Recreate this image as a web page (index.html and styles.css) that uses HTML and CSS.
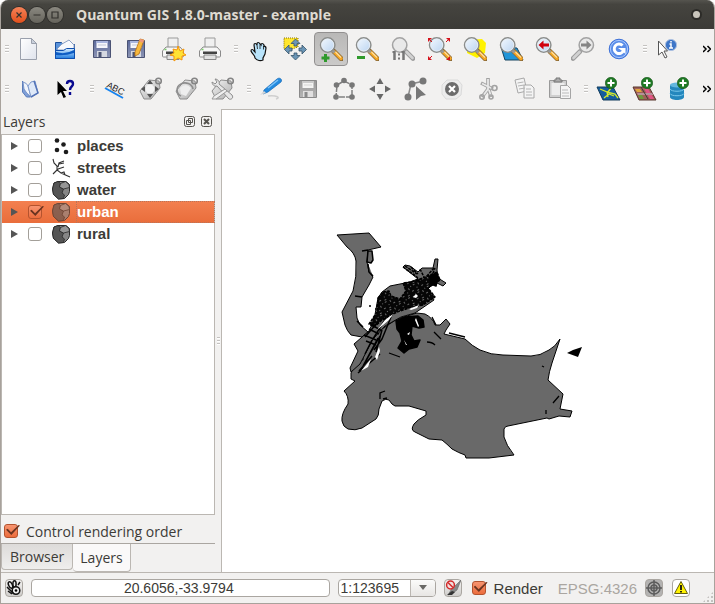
FILE: index.html
```html
<!DOCTYPE html>
<html lang="en">
<head>
<meta charset="utf-8">
<title>Quantum GIS 1.8.0-master - example</title>
<link rel="stylesheet" href="styles.css">
</head>
<body>
<svg class="defs" aria-hidden="true">
  <defs>
    <linearGradient id="lensBlue" x1="0" y1="0" x2="1" y2="1"><stop offset="0" stop-color="#f4f9ff"/><stop offset="1" stop-color="#b9d3f0"/></linearGradient>
    <linearGradient id="paper" x1="0" y1="0" x2="1" y2="1"><stop offset="0" stop-color="#fff"/><stop offset="1" stop-color="#dfe3ec"/></linearGradient>
    <linearGradient id="disk" x1="0" y1="0" x2="0" y2="1"><stop offset="0" stop-color="#5c6a9c"/><stop offset="1" stop-color="#8d95b4"/></linearGradient>
    <linearGradient id="blue" x1="0" y1="0" x2="0" y2="1"><stop offset="0" stop-color="#d8efff"/><stop offset="1" stop-color="#1f7be0"/></linearGradient>
    <linearGradient id="silver" x1="0" y1="0" x2="1" y2="1"><stop offset="0" stop-color="#f5f5f5"/><stop offset="1" stop-color="#adadad"/></linearGradient>
    <pattern id="cityBlocks" width="11" height="9" patternUnits="userSpaceOnUse" patternTransform="rotate(-32)">
      <path d="M0 0h11v9H0z" fill="#060606"/>
      <path d="M1 1h2v1H1zM6 2h1v2H6zM8 6h2v1H8zM3 5h1v1H3zM2 8h2v1H2zM9 1h1v1H9z" fill="#696969"/>
    </pattern>
    <symbol id="lens" viewBox="0 0 24 24">
      <path d="M15 14.500l7.500 7.500" stroke="#8a6a3a" stroke-width="5" stroke-linecap="round"/>
      <path d="M15.500 15l6.500 6.500" stroke="#f5a623" stroke-width="3.400" stroke-linecap="round"/>
      <path d="M16.500 15l5.500 5.500" stroke="#ffe0a0" stroke-width="1.200"/>
      <path d="M13 13l2.500 2.500" stroke="#999" stroke-width="3"/>
      <circle cx="8.700" cy="8" r="7.200" fill="url(#lensBlue)" stroke="#8b8d8b" stroke-width="1.500"/>
      <circle cx="8.700" cy="8" r="6" fill="none" stroke="#e9eef4" stroke-width=".8"/>
    </symbol>
    <symbol id="lensGray" viewBox="0 0 24 24">
      <path d="M15 14.500l7 7" stroke="#9d9d9d" stroke-width="4.600" stroke-linecap="round"/>
      <path d="M15.500 15l6 6" stroke="#d2d2d2" stroke-width="2.600" stroke-linecap="round"/>
      <circle cx="8.700" cy="8" r="7.200" fill="#e9e9e9" stroke="#a3a3a3" stroke-width="1.500"/>
    </symbol>
    <symbol id="printer" viewBox="0 0 24 24">
      <path d="M7 1h10v10H7z" fill="#f0f0f0" stroke="#9a9a9a"/>
      <path d="M5 10h14l3.500 4v5q0 1-1 1h-19q-1 0-1-1v-5z" fill="#f7f7f7" stroke="#8b8b8b"/>
      <path d="M5 14.500h14v2.500H5z" fill="#444"/>
      <path d="M6 18h12v4.500H6z" fill="#e2e2e2" stroke="#888"/>
      <path d="M3.500 12.500h2" stroke="#7bd06a" stroke-width="1.500"/>
    </symbol>
    <symbol id="floppy" viewBox="0 0 24 24">
      <path d="M3.500 3.500h17v17h-17z" fill="url(#disk)" stroke="#4b5374"/>
      <path d="M6.500 4h11v7h-11z" fill="#f5f6fb"/><path d="M6.500 4h11v2h-11z" fill="#a9b6df"/>
      <path d="M8 8h8" stroke="#c3c8d8"/>
      <path d="M7 14h10v6H7z" fill="#d5d8e1"/><path d="M8.500 15h3v5h-3z" fill="#4b5374"/>
    </symbol>
    <symbol id="tag" viewBox="0 0 24 24">
      <path d="M1 14L10 3l10 1 1 7-9 11-7 0z" fill="url(#silver)" stroke="#8c8c8c"/>
      <circle cx="19.500" cy="4" r="2.800" fill="none" stroke="#858585" stroke-width="1.600"/>
    </symbol>
    <symbol id="plus" viewBox="0 0 12 12">
      <circle cx="6" cy="6" r="5.700" fill="#1f7a24" stroke="#125016" stroke-width=".6"/>
      <path d="M6 2.500v7M2.500 6h7" stroke="#fff" stroke-width="2"/>
    </symbol>
    <symbol id="polygonLayer" viewBox="0 0 20 20">
      <path d="M7 1.500h8l3.500 3v7l-1 3-4 4-6 .5-5-4.500L1.500 9 3 3z" fill="#868686" stroke="#2a2a2a" stroke-linejoin="round"/>
      <path d="M3 3l4-1.500 2.500 2L8.500 7l4 2-1.500 4 2.500 2-1 3.500-5 .5-5-4.500L1.500 9z" fill="#555" stroke="#2a2a2a" stroke-width=".8"/>
      <path d="M9.500 3.500l5-2 3.500 3 .5 3-6 1.500-4-2z" fill="#969696" stroke="#2a2a2a" stroke-width=".8"/>
    </symbol>
  </defs>
</svg>
<div class="window">
  <header class="titlebar">
    <button class="wm close" aria-label="Close"><svg viewBox="0 0 16 16"><path d="M5.500 5.500l5 5m0-5l-5 5"/></svg></button>
    <button class="wm" aria-label="Minimize"><svg viewBox="0 0 16 16"><path d="M4.500 8h7"/></svg></button>
    <button class="wm" aria-label="Maximize"><svg viewBox="0 0 16 16"><path d="M5 5h6v6H5z"/></svg></button>
    <h1>Quantum GIS 1.8.0-master - example</h1>
    <span class="dot"></span>
  </header>

  <div class="toolbar">
    <i class="grip"></i>
    <div class="group">
      <button aria-label="New project"><svg viewBox="0 0 24 24"><path d="M2.500 1.500h11l5 5v16h-16z" fill="url(#paper)" stroke="#9aa0ac"/><path d="M13.500 1.500v5h5z" fill="#c9d0dc" stroke="#9aa0ac"/></svg></button>
      <button aria-label="Open project"><svg viewBox="0 0 24 24"><path d="M1.500 5.500h6l2 2h11v14h-19z" fill="#5b93da" stroke="#1b4f9c"/><path d="M3 12l5-5 7-4 5 5v5H4z" fill="#f7f9fd" stroke="#8ba0c4"/><path d="M1.500 21.500v-8h8l3-2h8v10z" fill="url(#blue)" stroke="#0f4faf"/><path d="M2 15q9 3 18-2v3q-9 3-18 2z" fill="#0d5cc4"/></svg></button>
      <button aria-label="Save project"><svg viewBox="0 0 24 24"><use href="#floppy"/></svg></button>
      <button aria-label="Save project as"><svg viewBox="0 0 24 24"><use href="#floppy" x="-2"/><path d="M14 2l4 1-5 14-4 2 0-4z" fill="#f7b83d" stroke="#b87418" stroke-width=".8"/><path d="M14 2l4 1-1 3-4-2z" fill="#f0967a"/></svg></button>
      <button aria-label="New print composer"><svg viewBox="0 0 24 24"><use href="#printer" x="-1"/><path d="M16 9l2 5 4-2-1 4 3 2-4 1 0 4-4-2-4 3 0-5-4-1 4-2-1-4 4 1z" fill="#ffe234" stroke="#f4940c"/></svg></button>
      <button aria-label="Composer manager"><svg viewBox="0 0 24 24"><use href="#printer"/></svg></button>
    </div>
    <i class="grip mid"></i>
    <div class="group">
      <button aria-label="Pan map"><svg viewBox="0 0 24 24"><path d="M8 21c0-3-3-4-4-7 0-2 2-2 3 0l1 1-1-7c0-2 2-2 3 0l0-1c0-2 2-2 3 0l1 1c0-2 2-2 3 0l0 2c0-1 2-1 2 1l-1 6-2 4v2c-2 1-6 1-8-2z" fill="#b9e4fb" stroke="#111" stroke-width="1.200"/><path d="M10 8l.5 4M13 7.500V12m3.500-3v3.500" stroke="#111" stroke-width=".8"/></svg></button>
      <button aria-label="Pan map to selection"><svg viewBox="0 0 24 24"><path d="M1 1h14v9l-6 2H1z" fill="#ffe62e" stroke="#8a7200" stroke-dasharray="1 1"/><path d="M12.500 2l4.500 4.500h-3V9h-3V6.500H8zM12.500 23l-4.500-4.500h3V16h3v2.500h3zM1.500 12.500L6 8v3h3v3H6v3zM23.500 12.500L19 8v3h-3v3h3v3z" fill="#6b95b5" stroke="#36546b" stroke-width=".8"/></svg></button>
      <button class="active" aria-label="Zoom in" aria-pressed="true"><svg viewBox="0 0 24 24"><use href="#lens"/><path d="M6.500 17v8M2.500 21h8" stroke="#2f9a2c" stroke-width="3"/></svg></button>
      <button aria-label="Zoom out"><svg viewBox="0 0 24 24"><use href="#lens"/><path d="M2 20.500h8" stroke="#2f9a2c" stroke-width="3"/></svg></button>
      <button aria-label="Zoom to native resolution"><svg viewBox="0 0 24 24"><use href="#lensGray"/><path d="M3.500 14v9M12.500 14v9" stroke="#777" stroke-width="2.500"/><path d="M1.500 15h2M10.500 15h2M8 16.500v2m0 2v2" stroke="#777" stroke-width="2"/></svg></button>
      <button aria-label="Zoom full"><svg viewBox="0 0 24 24"><use href="#lens" x="1"/><g fill="#d5121c"><path d="M1 1h4L1 5zM23 1h-4l4 4zM1 23h4l-4-4zM23 23h-4l4-4z"/></g><path d="M2 2l3 3M22 2l-3 3M2 22l3-3" stroke="#d5121c"/></svg></button>
      <button aria-label="Zoom to selection"><svg viewBox="0 0 24 24"><path d="M5 3l14-1 4 4-1 10-8 5-10-5z" fill="#fff200"/><use href="#lens"/></svg></button>
      <button aria-label="Zoom to layer"><svg viewBox="0 0 24 24"><path d="M2 10l16 1 6 12H6z" fill="#2095d8" stroke="#17445f"/><use href="#lens"/></svg></button>
      <button aria-label="Zoom last"><svg viewBox="0 0 24 24"><use href="#lens"/><path d="M3.500 8l5-4.500v3H14v3H8.500v3z" fill="#d1000f"/></svg></button>
      <button aria-label="Zoom next"><svg viewBox="0 0 24 24"><g transform="matrix(-1 0 0 1 24 0)"><use href="#lensGray"/></g><path d="M20.500 8l-5-4.500v3H10v3h5.500v3z" fill="#858585"/></svg></button>
      <button aria-label="Refresh"><svg viewBox="0 0 24 24"><circle cx="12" cy="12" r="9.800" fill="#5a8de8" stroke="#3f72d8"/><circle cx="12" cy="12" r="8.600" fill="none" stroke="#a9c8ff"/><path d="M15.500 8.500a4.800 4.800 0 1 0 1 5" fill="none" stroke="#fff" stroke-width="3"/><path d="M11 11h7.500v6l-2.500-2.500z" fill="#fff"/></svg></button>
    </div>
    <i class="grip mid"></i>
    <div class="group">
      <button aria-label="Identify features"><svg viewBox="0 0 24 24"><circle cx="15" cy="8" r="5.600" fill="#3e76c8" stroke="#aabfe0"/><path d="M13.500 7H15v4m-2 0h4M15 4v1.500" stroke="#fff" stroke-width="1.500" fill="none"/><path d="M2.500 4v14l3.500-3 3 6 2-1-3-6h3.500z" fill="#fff" stroke="#555"/></svg></button>
    </div>
    <button class="more" aria-label="More tools"><svg viewBox="0 0 8 8"><path d="M0 1l3 3-3 3M4.500 1l3 3-3 3"/></svg></button>
  </div>

  <div class="toolbar">
    <i class="grip"></i>
    <div class="group">
      <button aria-label="Help contents"><svg viewBox="0 0 24 24"><path d="M4.500 4l2 9 6 7-4 0-4-5z" fill="#7f9fd8" stroke="#5a7cba"/><path d="M5 5q4 1 5 4l3 11q-5-4-7-8z" fill="#f1f5fc" stroke="#7e99cb"/><path d="M13 5l4-1 3 12-7 4-3-11z" fill="#dfe9f8" stroke="#7e99cb"/><path d="M16 4l4 12-7 4" fill="none" stroke="#5474b8" stroke-width="1.500"/></svg></button>
      <button aria-label="What's this"><svg viewBox="0 0 24 24"><path class="ink" d="M3.500 4v14l3.500-3 2.500 6 2.500-1-3-6h4z"/><path d="M13 7c0-4 6-4 6 0 0 3-3 2-3 6M16 15v3" fill="none" stroke="#0a0a90" stroke-width="2.400"/></svg></button>
    </div>
    <i class="grip mid"></i>
    <div class="group">
      <button aria-label="Labeling"><svg viewBox="0 0 24 24"><path d="M2 11l18 10" stroke="#1784f0" stroke-width="2"/><text class="abc" x="3" y="10" transform="rotate(27 3 10)">ABC</text></svg></button>
      <button aria-label="Move label"><svg viewBox="0 0 24 24"><use href="#tag"/><circle cx="11" cy="12" r="4.500" fill="#f4f4f4"/><path d="M11 3l3 4H8zM11 21l3-4H8zM2 12l4-3v6zM20 12l-4-3v6z" fill="#555"/></svg></button>
      <button aria-label="Rotate label"><svg viewBox="0 0 24 24"><use href="#tag"/><path d="M6 19a8 7 0 1 1 12-7" fill="none" stroke="#8e8e8e" stroke-width="1.600"/><path d="M5 11q6-6 11 0l-5 8-5-2z" fill="#eee"/></svg></button>
      <button aria-label="Change label"><svg viewBox="0 0 24 24"><use href="#tag"/><path d="M4 2c3 0 5 3 4 5l13 11c2 3-1 5-3 4L6 9C3 10 1 7 1 5l3 2 2-2z" fill="#e6e6e6" stroke="#8d8d8d"/><path d="M14 12l2 2-11 8-4 0 2-3z" fill="#efefef" stroke="#999"/></svg></button>
    </div>
    <i class="grip mid"></i>
    <div class="group">
      <button aria-label="Toggle editing"><svg viewBox="0 0 24 24"><path d="M8 19c9-1 13 2 8 3" fill="none" stroke="#cfcfcf" stroke-width="1.500"/><path d="M4 13L17 2c2-2 6 0 4 3L8 15l-5 2z" fill="#238be0" stroke="#1467b4" stroke-width=".7"/><path d="M8 11L18 3" stroke="#7fc3f8" stroke-width="1.500"/><path d="M0 18l4-4 2 2z" fill="#d8d8d8"/></svg></button>
      <button aria-label="Save edits"><svg class="gray" viewBox="0 0 24 24"><use href="#floppy"/></svg></button>
      <button aria-label="Add feature"><svg viewBox="0 0 24 24"><path d="M12 4l8 4v12H4L5 8z" fill="none" stroke="#808080" stroke-width="1.500" stroke-dasharray="6 1"/><g fill="#777"><circle cx="12" cy="3.500" r="2.800"/><circle cx="4.500" cy="8" r="2.800"/><circle cx="20" cy="8" r="2.800"/><circle cx="4" cy="20" r="2.800"/><circle cx="20" cy="20" r="2.800"/></g></svg></button>
      <button aria-label="Move feature"><svg viewBox="0 0 24 24"><path d="M12 1l3.500 6h-7zM12 23l3.500-6h-7zM1 12l6-3.500v7zM23 12l-6-3.500v7z" fill="#686868"/></svg></button>
      <button aria-label="Node tool"><svg viewBox="0 0 24 24"><path d="M4 20L7 7l13-3" fill="none" stroke="#8c8c8c" stroke-width="1.500"/><g fill="#777"><circle cx="4" cy="20" r="3.500"/><circle cx="8" cy="7" r="3.500"/><circle cx="19" cy="4" r="3.500"/><path d="M12 9l10 9-5 1-5 4z"/></g></svg></button>
      <button aria-label="Delete selected"><svg viewBox="0 0 24 24"><path d="M7 3l11 0 4 5-1 10-5 4H6l-4-5V8z" fill="#ececec" stroke="#dadada"/><circle cx="12" cy="12" r="7" fill="#6c6c6c"/><path d="M9 9l6 6m0-6l-6 6" stroke="#fff" stroke-width="2.200"/></svg></button>
      <button aria-label="Cut features"><svg viewBox="0 0 24 24"><g stroke="#a2a2a2" stroke-width="3.600"><path d="M12 1v12M5 6l12 6M12 12l-6 8M13 13l2 7"/></g><g stroke="#e8e8e8" stroke-width="1.800"><path d="M12 2v11M6 6.500l11 5.500M12 12l-5 7M13 13l2 6"/></g><g fill="none" stroke="#a2a2a2" stroke-width="1.600"><circle cx="6" cy="20" r="2.200"/><circle cx="18.500" cy="11" r="2.500"/><circle cx="15" cy="20" r="2"/></g></svg></button>
      <button aria-label="Copy features"><svg viewBox="0 0 24 24"><g fill="#f4f4f4" stroke="#a8a8a8"><path d="M3 3l9-2 3 13-9 2z"/><path d="M12 8h7l3 3v10H12z"/></g><path d="M5.500 6l6-1M6 9l6-1M7 12l6-1M14 12h5m-5 3h6m-6 3h6" stroke="#b4b4b4"/></svg></button>
      <button aria-label="Paste features"><svg viewBox="0 0 24 24"><path d="M1.500 3.500h17v17h-17z" fill="#cfcfcf" stroke="#999"/><path d="M3.500 6h13v12h-13z" fill="#ededed"/><path d="M6 5V3h2V1h4v2h2v2z" fill="#aaa" stroke="#777"/><path d="M12.500 8.500h7l3 3v10h-10z" fill="#f5f5f5" stroke="#a5a5a5"/><path d="M14 13h6m-6 3h7m-7 3h7" stroke="#bbb"/></svg></button>
    </div>
    <i class="grip mid"></i>
    <div class="group">
      <button aria-label="Add vector layer"><svg viewBox="0 0 24 24"><path d="M0 10h16l7 13H6z" fill="#155d9e" stroke="#123c5c"/><path d="M3 12l7 3 1 5m-1-5l8 2 3 4M7 21l5-4 5 2M14 11l-3 4" fill="none" stroke="#d5e92c" stroke-width="1.300"/><use href="#plus" x="8" y="0" width="12" height="12"/></svg></button>
      <button aria-label="Add raster layer"><svg viewBox="0 0 24 24"><path d="M0 10h16l7 13H6z" fill="#a06058" stroke="#58362d"/><path d="M2 12h5l2 3H4z" fill="#e0a53d"/><path d="M5 18h4l2 4H7z" fill="#6d9a3c"/><path d="M10 10h4l7 12h-4z" fill="#e25385"/><path d="M4 16l15 0 2 2H5z" fill="#b79098"/><path d="M8 10l7 12" stroke="#403a35"/><use href="#plus" x="8" y="0" width="12" height="12"/></svg></button>
      <button aria-label="Add PostGIS layer"><svg viewBox="0 0 24 24"><path d="M1 8v12c0 4 14 4 14 0V8z" fill="#2487bd"/><ellipse cx="8" cy="8" rx="7" ry="2.500" fill="#63b7df"/><path d="M1 12c1 3 13 3 14 0M1 16.500c1 3 13 3 14 0" fill="none" stroke="#7bc7ea"/><use href="#plus" x="8" y="0" width="12" height="12"/></svg></button>
    </div>
    <button class="more" aria-label="More tools"><svg viewBox="0 0 8 8"><path d="M0 1l3 3-3 3M4.500 1l3 3-3 3"/></svg></button>
  </div>

  <main class="workspace">
    <aside class="dock">
      <div class="dock-title">
        <h2>Layers</h2>
        <button aria-label="Float panel"><svg viewBox="0 0 11 11"><rect x=".5" y=".5" width="10" height="10" rx="2"/><path d="M4.500 2.500h4v4h-4zM2.500 4.500h4v4h-4z"/></svg></button>
        <button aria-label="Close panel"><svg viewBox="0 0 11 11"><rect x=".5" y=".5" width="10" height="10" rx="2"/><path d="M3 3l5 5m0-5L3 8" stroke-width="2"/></svg></button>
      </div>
      <ul class="tree">
        <li><i class="arrow"></i><input type="checkbox" id="l1"><svg viewBox="0 0 20 20"><g fill="#1c1c1c"><circle cx="6" cy="4.500" r="2.300"/><circle cx="12.500" cy="8.500" r="2.300"/><circle cx="6" cy="14" r="2.300"/><circle cx="15" cy="16" r="2.300"/></g></svg><label for="l1">places</label></li>
        <li><i class="arrow"></i><input type="checkbox" id="l2"><svg viewBox="0 0 20 20"><path d="M2 1l1 4 3 3 0 4 4 3 9 4M7 9l1-4 5-2M8 6l5-1M7 11l6-2M2 16l5-5M10 15l3-1 1 3" fill="none" stroke="#333" stroke-width="1.100"/></svg><label for="l2">streets</label></li>
        <li><i class="arrow"></i><input type="checkbox" id="l3"><svg viewBox="0 0 20 20"><use href="#polygonLayer"/></svg><label for="l3">water</label></li>
        <li class="selected"><i class="arrow"></i><input type="checkbox" id="l4" checked><svg viewBox="0 0 20 20"><use href="#polygonLayer"/></svg><label for="l4">urban</label></li>
        <li><i class="arrow"></i><input type="checkbox" id="l5"><svg viewBox="0 0 20 20"><use href="#polygonLayer"/></svg><label for="l5">rural</label></li>
      </ul>
      <div class="order"><input type="checkbox" id="order" checked><label for="order">Control rendering order</label></div>
      <nav class="tabs"><button>Browser</button><button class="current">Layers</button></nav>
    </aside>
    <div class="splitter"><i></i></div>
    <section class="canvas">
      <svg viewBox="222 110 492 462" role="img" aria-label="Map">
        <g fill="#696969" stroke="#000" stroke-width="1" stroke-linejoin="round">
          <path d="M337 235l32-2 12 14-13 3-1 12 2 10 4 5-4 8-7 12-1 10-5 0 1 11 3 7 8 7-6 5-11-2q-4-4-6-10l-3-13 11-21q4-14 3-30-1-8-9-14z"/>
          <path d="M362 337q3 12 1 23l-7 1-5 12v6l4 2-11 10q5 5 4 13-7 10-6 17 1 6 6 8 7 2 14-1l14-9q3-3 3-10l3-8q4-3 7-1 3 5 6 6h14l17 5v4q-9 5-12 9-4 6 1 8l14 7 13 1q5 4 10 9 7 4 13 6l1 3 23 0 25-3q-8-10-10-18l0-8q1-3 4-3l39-8 2 1 10-3 11 1 2-6-12-2 3-15-15-14q1-8 4-17l8-24q-5 8-11 11-9 6-18 6l-28-1q-12 0-23-5-8-4-15-11l-21-5q1-3 6-10l-4-5-6 6-5 0q-2-7-10-11l-8-1-20 6-21 14z"/>
          <path d="M378 298l4-6 8-6 20-4 8-3-15-12 2-2 5 1 8 6 4-4 11 0 2-9 3 0-1 11 1 8 8 5-3 3-8-4-7 7 6 11-19 13-14 4-16 9-12 13-13 25-9 8-1-4 8-17-4-7 15-13 5-11z"/>
          <path d="M368 251l4 0 1 9-2 3-4-1zM368 264l1 8 4 4M362 251l6-1M355 296l7 1M357 321l6 6" stroke-width="1.500"/>
        </g>
        <g class="streets">
          <path d="M378 298l5-6 6-1 2 5 9 3 6-8-3-8 8-1 9-3 8-3 9-4 3 8-6 4-6 4 7 9-12 8-14 3-12 4-15 8-8 7-5-3 8-12z" class="block"/>
          <path d="M378 322l-13 15M386 318l-13 21M391 317l-9 22-8 11M364 335l12 5M369 329l10 5M372 325l10 6M366 341l10 4M372 340l-7 14M378 338l-15 28M359 371l13-15M380 336l-18 32M358 373l22-19M382 330l-6 22"/>
          <path d="M396 321l9-4 13-1 5 4 1 7-5 1-7-2-1 9 3 6 6-1-3 7-8 2-5 4-6-5 4-7-2-8-3-4z" class="solid"/>
          <path d="M403 267l14 10 3 6M405 266l12 8M411 267l7 7M420 269l4 8M434 268l-8 9M430 281l5-13" stroke-dasharray="3 1"/>
          <path d="M430 277l6-3 2 3-2 9-5-2z" class="solid"/>
        </g>
        <g fill="#fff"><path d="M413 297l3-3 2 2-2 2zM409 309l10-4-2 3-6 2zM385 320l8-6-4 6-12 10zM375 357l4-10 1 4-3 9zM361 371l10-12-3 8zM416 318l3 8-1 1-3-7zM407 334l3-2-1 3zM404 340l3 5-1 0z"/></g>
        <g fill="none" stroke="#000" stroke-width="1.300"><path d="M389 353l11 4M427 342q5 0 8 3M434 332l7 7M553 403l6-7M546 410l0 4M542 366l2 1M380 399v-6l5-2M383 399l4-1M432 317l4 8M449 333l16 4M369 306h2M375 309h1"/></g>
        <path d="M567 353l6-3 9-3-2 5-2 5z" fill="#000"/>
      </svg>
    </section>
  </main>

  <footer class="status">
    <button class="sbtn" aria-label="Toggle extents"><svg viewBox="0 0 16 16"><g fill="#eee" stroke="#111" stroke-width="1.500"><ellipse cx="4.500" cy="5" rx="1.800" ry="3.500" transform="rotate(-25 4.500 5)"/><ellipse cx="8.500" cy="4" rx="1.600" ry="3.200"/><circle cx="10" cy="10.500" r="3.800"/><path d="M1 7l7 7M12 5l2-3M2 11l4 3"/></g><circle cx="10" cy="10.500" r="1.300"/></svg></button>
    <input class="coords" type="text" value="20.6056,-33.9794" aria-label="Coordinates">
    <div class="scale"><select aria-label="Scale"><option>1:123695</option></select><span><svg viewBox="0 0 8 6"><path d="M0 0h8L4 5z" fill="#6a6966"/></svg></span></div>
    <button class="sbtn" aria-label="Stop rendering"><svg viewBox="0 0 16 16"><path d="M16 0l-4 10-4 3-5 2 3-5z" fill="#888" stroke="#666" stroke-width=".6"/><path d="M2 15l5-4 3 1-3 3z" fill="#333"/><circle cx="5.500" cy="5" r="3.900" fill="#f3dede" stroke="#d22a2a" stroke-width="1.500"/><path d="M3 2.500l5 5" stroke="#d22a2a" stroke-width="1.500"/></svg></button>
    <div class="render"><input type="checkbox" id="render" checked><label for="render">Render</label></div>
    <span class="crs">EPSG:4326</span>
    <button class="sbtn dark" aria-label="CRS status"><svg viewBox="0 0 16 16"><g fill="none" stroke="#5c5c5c" stroke-width="1.500"><circle cx="8" cy="8" r="6"/><circle cx="8" cy="8" r="3"/><path d="M8 0v16M0 8h16"/></g></svg></button>
    <button class="sbtn warn" aria-label="Messages"><svg viewBox="0 0 16 16"><path d="M8 1.500l6.500 12h-13z" fill="#fff200" stroke="#635e10" stroke-linejoin="round"/><path d="M8 5v5M8 11v1.500" stroke="#111" stroke-width="1.800"/></svg></button>
    <i class="resize"></i>
  </footer>
</div>
</body>
</html>
```
FILE: styles.css
```css
* { box-sizing: border-box; }
body { margin: 0; background: #fff; color: #3c3b37; font: 14px "Open Sans", "Noto Sans", sans-serif; }
button { padding: 0; border: 0; background: none; font: inherit; color: inherit; }
h1, h2 { margin: 0; font-size: 14px; }
svg { display: block; }
.defs { position: absolute; width: 0; height: 0; }

.window {
  display: flex; flex-direction: column; min-height: 100vh;
  background: #f2f1f0; border: solid #a8a29c; border-width: 0 1px 1px;
  border-radius: 8px 8px 0 0; overflow: hidden;
}

.titlebar {
  display: flex; align-items: center; gap: 2px; height: 29px; padding: 0 10px 0 11px; margin: 0 -1px;
  background: linear-gradient(#55544e, #45443f 15%, #3c3b37); color: #dfdbd2;
}
.titlebar h1 { flex: 1; padding-left: 11px; font-weight: 700; }
.wm { width: 16px; height: 16px; border-radius: 50%; background: linear-gradient(#8a8880, #66645c); box-shadow: 0 0 0 1px #302f2c; }
.wm.close { background: linear-gradient(#f58258, #e2501c); }
.wm svg { fill: none; stroke: #32312d; stroke-width: 1.2; }
.dot { width: 7px; height: 7px; margin-right: 5px; border-radius: 50%; background: #c9c5bc; box-shadow: 0 0 0 2px #2c2b28; }

.toolbar { display: flex; align-items: center; height: 40px; padding-left: 4px; }
.group { display: flex; gap: 2px; }
.group button { display: grid; place-items: center; width: 34px; height: 34px; border: 1px solid transparent; border-radius: 4px; }
.group button.active { border-color: #929090; background: linear-gradient(#b9b8b7, #cbcac9); }
.group svg { width: 24px; height: 24px; overflow: visible; fill: none; }
.group svg.gray { filter: grayscale(1); opacity: .65; }
.grip { width: 4px; height: 8px; margin-right: 4px; background: repeating-linear-gradient(#c4c2c0 0 1px, #fff 1px 2px, transparent 2px 3px); }
.grip.mid { margin: 0 4px 0 7px; }
.abc { font: 9px "Liberation Sans", sans-serif; fill: #222; }
.ink { fill: #000; }
.more { width: 8px; height: 8px; margin: 0 3px 0 auto; }
.more svg { fill: none; stroke: #000; stroke-width: 1.5; }

.workspace { display: flex; flex: 1; }
.dock { display: flex; flex-direction: column; width: 214px; }
.dock-title { display: flex; align-items: center; gap: 6px; height: 25px; padding: 0 3px 0 2px; }
.dock-title h2 { flex: 1; font-weight: 400; }
.dock-title svg { width: 11px; height: 11px; fill: none; stroke: #55534e; }
.tree { flex: 1; margin: 0; padding: 0; list-style: none; background: #fff; border: 1px solid #bbb7b2; }
.tree li { display: flex; align-items: center; height: 22px; padding-left: 9px; font: bold 15px "Liberation Sans", sans-serif; }
.tree svg { width: 20px; height: 20px; margin: 0 6px 0 9px; }
.tree .selected { background: linear-gradient(#f38050, #e96d3b); color: #fff; }
.tree .selected svg { opacity: .65; }
.tree label { flex: 1; line-height: 20px; }
.selected label { outline: 1px dotted #b8755a; }
.arrow { width: 7px; height: 8px; margin-right: 10px; background: #555; clip-path: polygon(0 0, 100% 50%, 0 100%); }
input[type="checkbox"] {
  appearance: none; flex: none; width: 14px; height: 14px; margin: 0;
  border: 1px solid #a39f99; border-radius: 3px; background: #fff; position: relative;
}
input[type="checkbox"]:checked { border-color: #b4532e; background: linear-gradient(#f79470, #ec6d3d); }
input[type="checkbox"]:checked::after {
  content: ""; position: absolute; left: 1px; top: 0; width: 14px; height: 10px; background: #6b3420;
  clip-path: polygon(0 48%, 12% 38%, 36% 72%, 90% 0, 100% 4%, 38% 100%);
}
.order { display: flex; align-items: center; gap: 8px; height: 28px; padding: 4px 0 0 3px; }
.tabs { display: flex; align-items: flex-start; height: 29px; border-top: 1px solid #aaa6a1; }
.tabs button { height: 26px; padding: 0 8px; border: solid #bbb7b2; border-width: 0 1px 1px; border-radius: 0 0 4px 4px; background: linear-gradient(#dddbd9, #efeeed); }
.tabs .current { height: 28px; padding: 0 7px; border-left: 0; background: #faf9f9; }
.splitter { display: grid; place-items: center; width: 6px; }
.splitter i { width: 3px; height: 8px; background: repeating-linear-gradient(#c4c2c0 0 1px, #fff 1px 2px, transparent 2px 3px); }
.canvas { flex: 1; min-width: 0; background: #fff; border: 1px solid #bbb7b2; border-width: 1px 0 0 1px; }
.canvas svg { width: 100%; height: 100%; }
.streets { fill: none; stroke: #000; stroke-linejoin: round; stroke-width: 1.5; }
.streets .block { fill: url(#cityBlocks); stroke-dasharray: 3 1; }
.streets .solid { fill: #000; }

.status { display: flex; align-items: center; height: 31px; padding: 0 0 0 4px; border-top: 1px solid #bbb7b2; font-family: "Liberation Sans", sans-serif; }
.sbtn { width: 18px; height: 18px; border: 1px solid #aaa6a1; border-radius: 4px; background: linear-gradient(#f4f3f2, #cfcdcb); }
.sbtn svg { width: 16px; height: 16px; }
.sbtn.dark { background: #b4b3b2; }
.sbtn.warn { margin: 0 12px 0 9px; background: #fff; }
.coords { flex: 1; min-width: 0; height: 18px; margin: 0 8px; padding: 0 3px 0 0; border: 1px solid #aaa6a1; border-radius: 4px; background: #fff; color: inherit; font: inherit; text-align: center; }
.scale { display: grid; width: 98px; height: 18px; margin-right: 8px; }
.scale > * { grid-area: 1 / 1; }
.scale select { appearance: none; width: 100%; padding: 0 2px; border: 1px solid #aaa6a1; border-radius: 4px; background: #fff; color: inherit; font: inherit; line-height: 16px; }
.scale span { display: grid; place-items: center; justify-self: end; width: 25px; margin: 1px; border-left: 1px solid #bbb7b2; border-radius: 0 3px 3px 0; background: linear-gradient(#fbfbfa, #e8e6e4); pointer-events: none; }
.scale span svg { width: 8px; height: 6px; }
.render { display: flex; align-items: center; gap: 8px; margin: 0 15px 0 10px; font-size: 15px; }
.crs { margin-right: 8px; color: #aaa6a1; font-size: 15px; }
.resize { align-self: flex-end; width: 12px; height: 12px; background: radial-gradient(circle, #c4c2c0 1px, transparent 1px) 0 0 / 4px 4px; clip-path: polygon(100% 0, 100% 100%, 0 100%); }
```
